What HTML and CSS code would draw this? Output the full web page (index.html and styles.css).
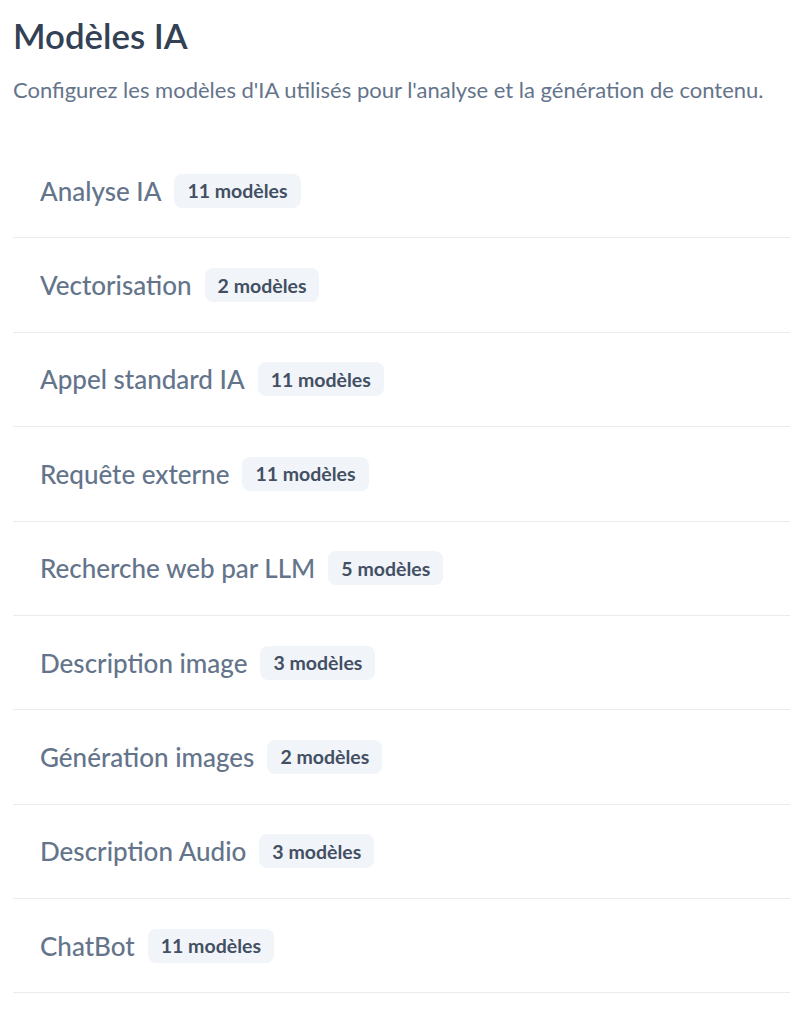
FILE: index.html
```html
<!DOCTYPE html>
<html lang="fr">
<head>
<meta charset="utf-8">
<title>Modèles IA</title>
<link rel="stylesheet" href="styles.css">
</head>
<body>
<main class="page">
  <header class="header">
    <h1 class="title">Modèles IA</h1>
    <p class="subtitle">Configurez les modèles d'IA utilisés pour l'analyse et la génération de contenu.</p>
  </header>
  <ul class="list">
    <li class="row"><span class="label">Analyse IA</span><span class="badge">11 modèles</span></li>
    <li class="row"><span class="label">Vectorisation</span><span class="badge">2 modèles</span></li>
    <li class="row"><span class="label">Appel standard IA</span><span class="badge">11 modèles</span></li>
    <li class="row"><span class="label">Requête externe</span><span class="badge">11 modèles</span></li>
    <li class="row"><span class="label">Recherche web par LLM</span><span class="badge">5 modèles</span></li>
    <li class="row"><span class="label">Description image</span><span class="badge">3 modèles</span></li>
    <li class="row"><span class="label">Génération images</span><span class="badge">2 modèles</span></li>
    <li class="row"><span class="label">Description Audio</span><span class="badge">3 modèles</span></li>
    <li class="row"><span class="label">ChatBot</span><span class="badge">11 modèles</span></li>
  </ul>
</main>
</body>
</html>
```
FILE: styles.css
```css
* { box-sizing: border-box; }
html, body { margin: 0; padding: 0; background: #ffffff; }
body { font-family: Lato, "Open Sans", sans-serif; }
.page { padding: 15px 0 0 13px; }
.header { display: flex; flex-direction: column; gap: 18px; }
.title {
  margin: 0;
  font-size: 34.8px;
  line-height: 42px;
  font-weight: 600;
  color: #334155;
}
.subtitle {
  margin: 0;
  font-size: 22px;
  line-height: 30px;
  color: #64748b;
}
.list { list-style: none; margin: 39px 0 0; padding: 0; }
.row {
  display: flex;
  align-items: center;
  gap: 13px;
  padding: 29.7px 0 29.7px 27px;
  border-bottom: 1px solid #e8ebf0;
}
.label {
  font-size: 26px;
  line-height: 34px;
  color: #64748b;
  font-weight: 500;
}
.badge {
  display: inline-flex;
  align-items: center;
  height: 34px;
  padding: 0 13px;
  border-radius: 8px;
  background: #f1f5f9;
  color: #434f63;
  font-size: 19.5px;
  font-weight: 700;
}
```
